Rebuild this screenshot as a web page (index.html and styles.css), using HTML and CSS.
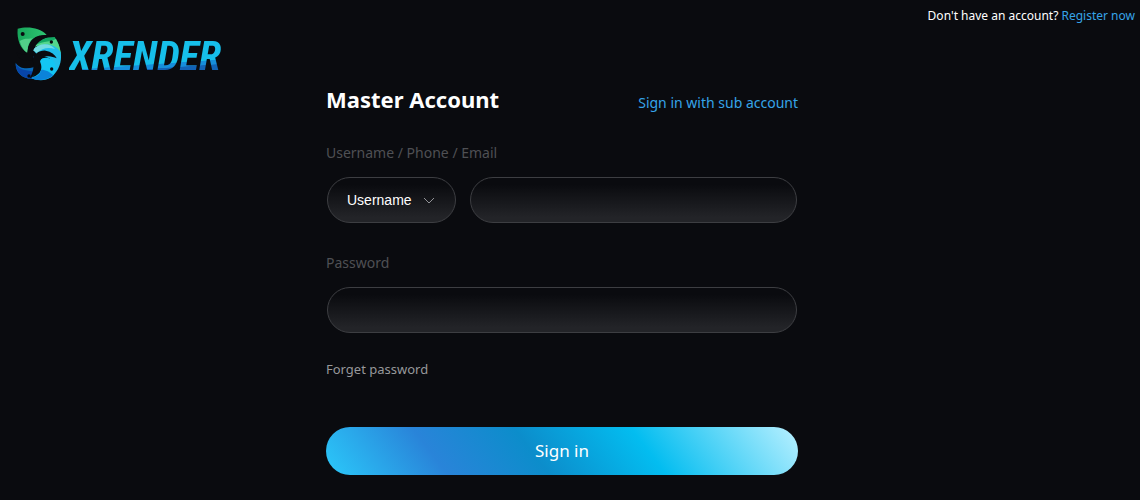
FILE: index.html
```html
<!DOCTYPE html>
<html lang="en">
<head>
<meta charset="utf-8">
<meta name="viewport" content="width=device-width, initial-scale=1">
<title>XRENDER</title>
<link rel="stylesheet" href="styles.css">
</head>
<body>
<header class="top">
  <a class="logo" href="#" aria-label="XRENDER">
    <svg class="logo-mark" viewBox="45 33 147 165" aria-hidden="true">
      <defs>
        <linearGradient id="green" x1="0" y1="0" x2="1" y2="0"><stop offset="0" stop-color="#17a65a"/><stop offset="1" stop-color="#2fc573"/></linearGradient>
      </defs>
      <path fill="url(#green)" d="M53 41C80 34 119 36 140 60C116 58 98 67 90 83C83 94 83 105 83 114C61 102 50 73 53 41Z"/>
      <path fill="#52cf88" d="M59 78C76 68 90 73 99 70C84 82 82 99 83 114C71 107 63 94 59 78Z"/>
      <path fill="#13a963" d="M98 98C106 74 138 66 164 66C173 79 181 96 182 118C163 90 130 82 98 98Z"/>
      <path fill="#54d78c" d="M98 98C119 75 147 85 168 72C176 87 183 103 182 124C160 90 126 84 98 98Z"/>
      <path fill="#20bfea" d="M98 105C117 84 160 80 182 111C187 141 176 169 154 186C164 160 162 138 148 130C135 122 122 122 117 128C111 119 105 109 98 105Z"/>
      <path fill="#74dce0" d="M98 105C119 82 151 84 165 102C147 96 126 98 111 114Z"/>
      <path fill="#13c6f3" d="M119 134C134 122 162 128 166 150C168 165 164 180 154 187C132 200 107 196 91 188C114 184 125 171 124 155C124 147 120 141 119 134Z"/>
      <path fill="#0b83d9" d="M124 164C137 164 151 171 160 181C142 197 112 200 91 188C108 187 120 178 124 164Z"/>
      <path fill="#0869b9" d="M47 143C58 161 78 163 101 157C106 144 99 132 101 123C115 141 112 172 94 191C66 191 45 171 47 143Z"/>
      <path fill="#0745a9" d="M47 146C59 168 80 164 103 171L94 191C67 191 48 171 47 146Z"/>
      <g fill="#0a0b0f">
        <path d="M151 63C125 58 100 66 90 84C82 98 84 112 79 119C70 120 57 116 49 112C54 132 71 142 98 136C94 118 100 101 110 88C120 76 135 68 151 63Z"/>
        <path d="M98 136C100 117 119 105 137 107C154 110 165 119 170 130C158 124 141 120 128 128C118 135 119 147 115 160C110 174 101 184 89 191C98 173 104 158 98 136Z"/>
        <circle cx="68" cy="57" r="6"/><circle cx="154" cy="81" r="5"/><circle cx="155" cy="162" r="5"/><circle cx="87" cy="183" r="5"/>
      </g>
    </svg>
    <span class="logo-name">XRENDER</span>
  </a>
  <p class="register">Don't have an account? <a href="#">Register now</a></p>
</header>
<main class="login">
  <div class="heading">
    <h1>Master Account</h1>
    <a href="#">Sign in with sub account</a>
  </div>
  <form>
    <label class="label" for="account">Username / Phone / Email</label>
    <div class="fields">
      <div class="picker">
        <select class="field" aria-label="Account type"><option>Username</option><option>Phone</option><option>Email</option></select>
        <svg class="chevron" viewBox="0 0 12 8" aria-hidden="true"><path d="M1 1L6 6L11 1"/></svg>
      </div>
      <input class="field" id="account" type="text">
    </div>
    <label class="label" for="password">Password</label>
    <div class="fields">
      <input class="field" id="password" type="password">
    </div>
    <a class="forgot" href="#">Forget password</a>
    <button class="submit" type="submit">Sign in</button>
  </form>
</main>
</body>
</html>
```
FILE: styles.css
```css
* { box-sizing: border-box; }
body {
  margin: 0;
  background: #0a0b0f;
  color: #fff;
  font-family: "Noto Sans", sans-serif;
  font-size: 14px;
  line-height: 20px;
}
a { color: #36a4e8; text-decoration: none; }
.top {
  display: flex;
  justify-content: space-between;
  align-items: flex-start;
  padding: 6px 5px 0 15px;
}
.logo { display: flex; align-items: center; gap: 5px; padding-top: 20px; }
.logo-mark { width: 49px; height: 55px; }
.logo-name {
  padding: 5px 4px 0 0;
  font: italic bold 41px/48px "Roboto Condensed", "Liberation Sans Narrow", sans-serif;
  background: linear-gradient(176deg, #16bfea 67%, #168edb 68%, #168edb 74%, #1263b7 75%);
  background-clip: text;
  color: transparent;
}
.register { margin: 0; font-size: 12px; }
.login { width: 100%; max-width: 488px; margin: 0 auto; padding: 5px 16px 24px 0; }
.heading { display: flex; justify-content: space-between; align-items: baseline; }
h1 { margin: 0; font-size: 22px; line-height: 26px; }
.label { display: block; margin-top: 30px; color: #4f5054; }
.fields { display: flex; gap: 14px; margin-top: 14px; padding: 0 1px; }
.picker { position: relative; flex: 0 0 129px; }
.field {
  display: block;
  width: 100%;
  height: 46px;
  padding: 0 19px;
  border: 1px solid #3d3e42;
  border-radius: 23px;
  background: linear-gradient(#0a0b0f 15%, #232428 90%);
  color: #fff;
  font: 14px "Liberation Sans", sans-serif;
  appearance: none;
}
.chevron {
  position: absolute;
  right: 21px;
  bottom: 18px;
  width: 12px;
  height: 8px;
  fill: none;
  stroke: #929397;
  pointer-events: none;
}
.forgot { display: inline-block; margin-top: 26px; color: #97989b; font-size: 13px; }
.submit {
  display: block;
  width: 100%;
  height: 48px;
  margin-top: 48px;
  padding: 0 0 2px;
  border: 0;
  border-radius: 24px;
  background: linear-gradient(53deg, #2bc9fa 0%, #2984d9 24%, #0c8dcb 44%, #03bdf0 67%, #b9f0ff 100%);
  color: #fff;
  font: 17px "Noto Sans", sans-serif;
}
```
